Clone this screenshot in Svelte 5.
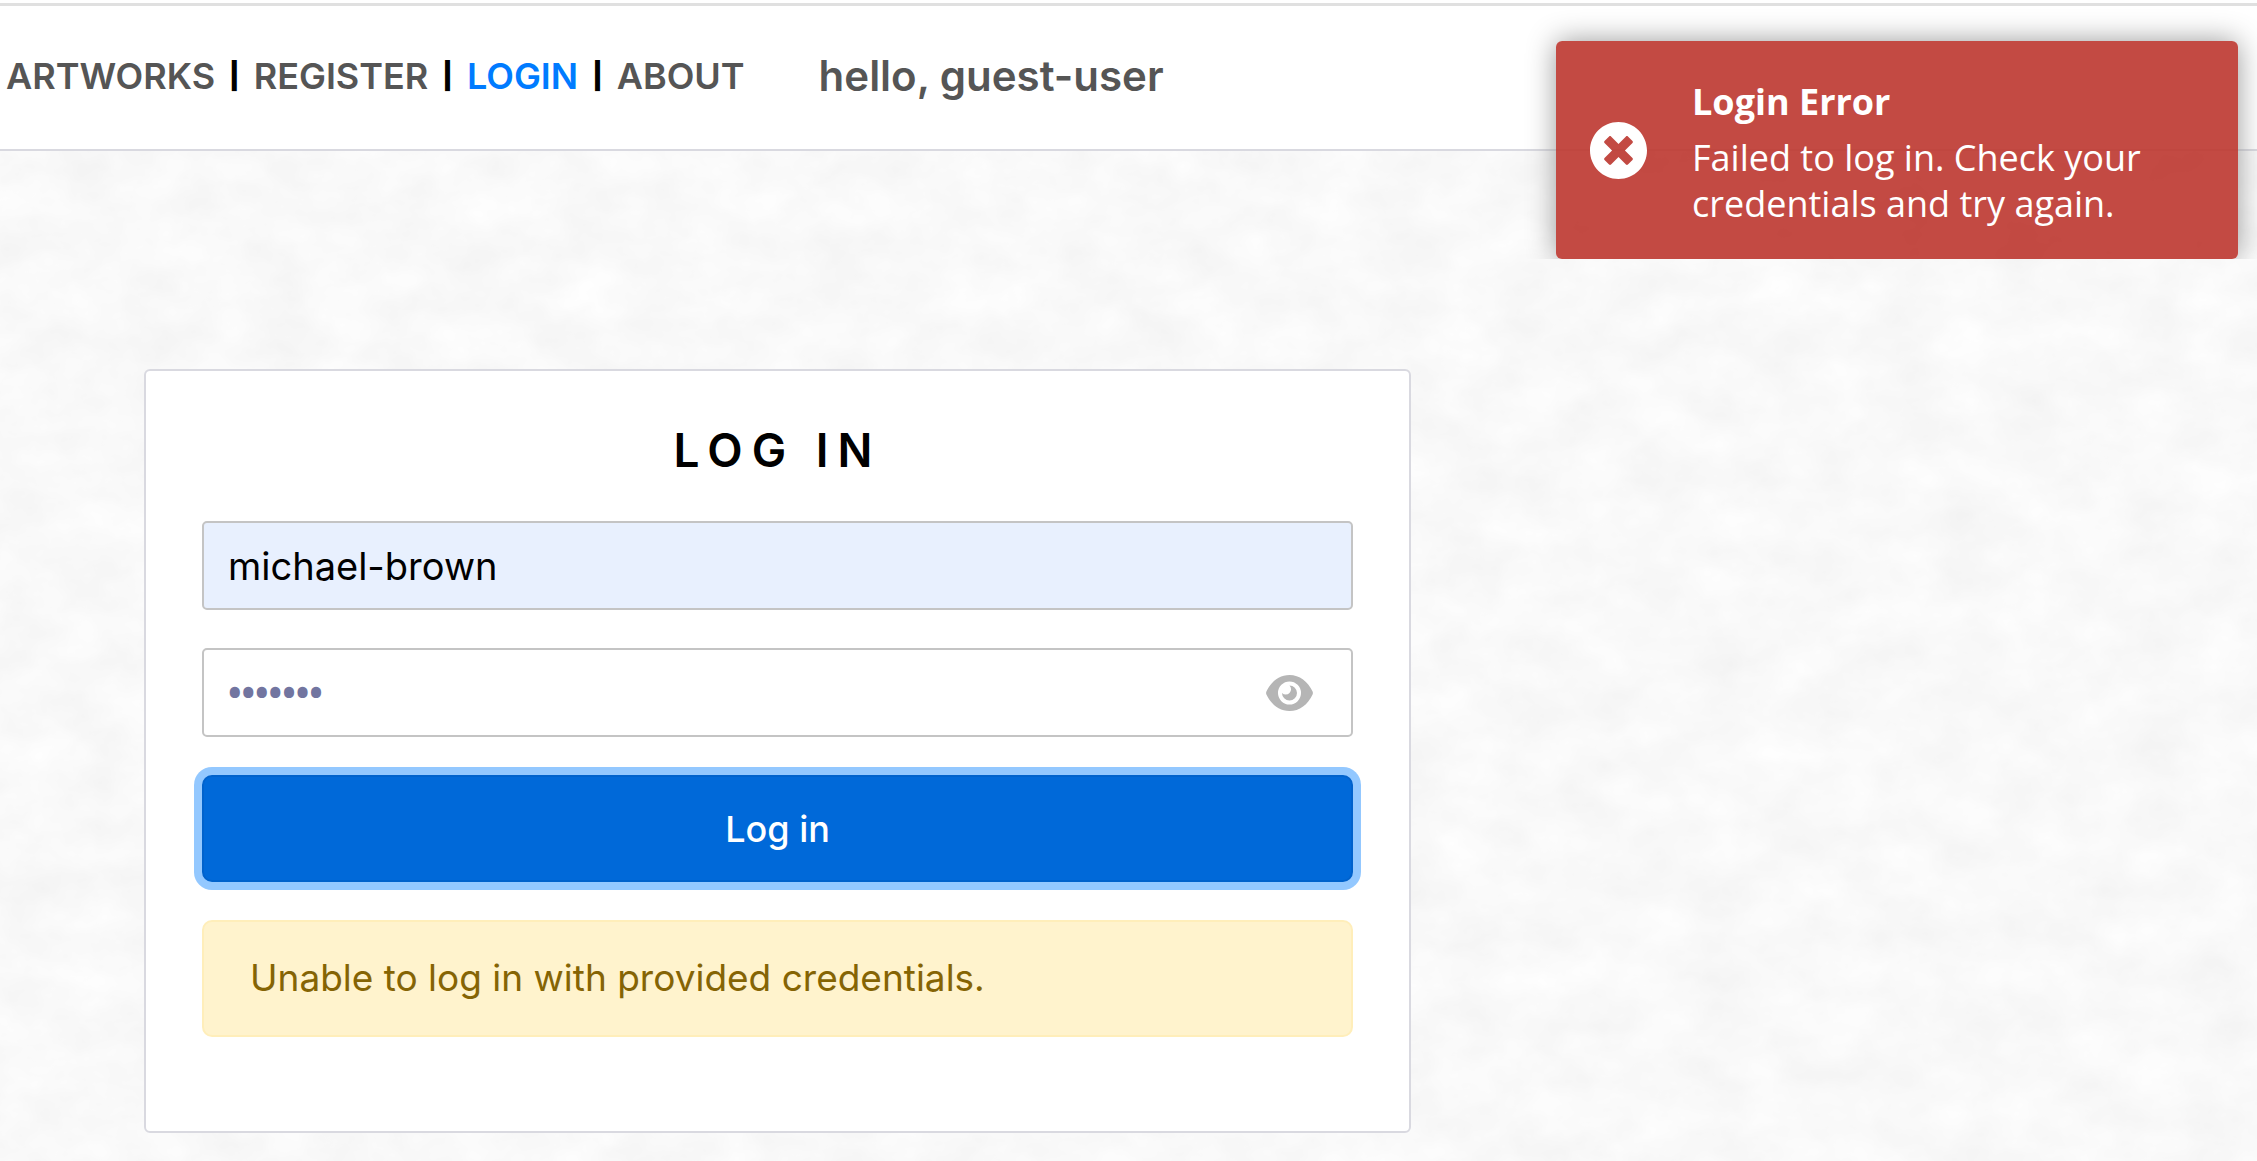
<script>
  let username = $state('michael-brown');
  let password = $state('secrets');
  let visible = $state(false);
  const links = ['ARTWORKS', 'REGISTER', 'LOGIN', 'ABOUT'];
</script>

<div class="page">
  <svg class="texture" aria-hidden="true">
    <filter id="plaster" x="0" y="0" width="100%" height="100%" color-interpolation-filters="sRGB">
      <feTurbulence type="fractalNoise" baseFrequency="0.016 0.022" numOctaves="4" seed="8" result="noise" />
      <feColorMatrix type="matrix" values="0.05 0 0 0 0.951  0.05 0 0 0 0.951  0.05 0 0 0 0.951  0 0 0 0 1" />
    </filter>
    <rect width="100%" height="100%" filter="url(#plaster)" />
  </svg>

  <header>
    <nav aria-label="Main">
      {#each links as link, i}
        {#if i > 0}<span class="bar">|</span>{/if}
        <a href="#{link.toLowerCase()}" class:active={link === 'LOGIN'}>{link}</a>
      {/each}
    </nav>
    <span class="hello">hello, guest-user</span>
  </header>

  <main>
    <form class="card" onsubmit={(e) => e.preventDefault()}>
      <h1>LOG IN</h1>
      <input class="field filled" type="text" aria-label="Username" bind:value={username} />
      <div class="field password">
        <input type={visible ? 'text' : 'password'} aria-label="Password" bind:value={password} />
        <button type="button" class="eye" aria-label="Show password" onclick={() => (visible = !visible)}>
          <svg viewBox="0 0 47 36">
            <path fill-rule="evenodd" d="M0.4 16.6C5 6.600 13.500 0 23.500 0S42 6.600 46.600 16.600Q47.200 18 46.600 19.400C42 29.400 33.500 36 23.500 36S5 29.400 0.400 19.400Q-0.200 18 0.400 16.600ZM23.500 6.500a11.500 11.500 0 1 0 0 23a11.500 11.500 0 1 0 0-23Z" />
            <path d="M23.500 10.500a7.500 7.500 0 1 1-7.500 7.500a4.800 4.800 0 0 0 7.500-7.500Z" />
          </svg>
        </button>
      </div>
      <button type="submit" class="submit">Log in</button>
      <p class="warning" role="alert">Unable to log in with provided credentials.</p>
    </form>
  </main>

  <div class="toasts">
    <div class="toast" role="alert">
      <svg viewBox="8 8 496 496" aria-hidden="true">
        <path d="M256 8C119 8 8 119 8 256s111 248 248 248 248-111 248-248S393 8 256 8zm121.600 313.100c4.700 4.700 4.700 12.300 0 17L338 377.600c-4.700 4.700-12.300 4.700-17 0L256 312l-65.100 65.600c-4.700 4.700-12.300 4.700-17 0L134.400 338c-4.700-4.700-4.700-12.300 0-17l65.600-65-65.600-65.100c-4.700-4.700-4.700-12.300 0-17l39.600-39.600c4.700-4.700 12.300-4.700 17 0l65 65.700 65.100-65.600c4.700-4.700 12.300-4.700 17 0l39.600 39.600c4.700 4.700 4.700 12.300 0 17L312 256l65.600 65.100z" />
      </svg>
      <div class="message">
        <strong>Login Error</strong>
        <p>Failed to log in. Check your credentials and try again.</p>
      </div>
    </div>
  </div>
</div>

<style>
  :global(body) {
    margin: 0;
    background: #fafafa;
  }
  .page {
    position: relative;
    isolation: isolate;
    box-sizing: border-box;
    min-height: 100vh;
    padding-top: 3px;
    overflow: hidden;
    background: #fff;
    font-family: Inter, 'Liberation Sans', sans-serif;
    font-size: 37px;
    color: #000;
  }
  .texture {
    position: absolute;
    inset: 0;
    z-index: -1;
    width: 100%;
    height: 100%;
  }
  header {
    display: flex;
    align-items: center;
    gap: 74px;
    box-sizing: border-box;
    height: 148px;
    padding: 0 0 4px 6px;
    border-top: 3px solid #e0e0e0;
    border-bottom: 2px solid #d9d9e0;
    background: #fff;
    box-shadow: 0 -3px #fff;
    white-space: nowrap;
  }
  nav {
    display: flex;
    align-items: center;
    gap: 14px;
    font-size: 36px;
    font-weight: 600;
  }
  nav a {
    color: #555;
    text-decoration: none;
  }
  nav a.active {
    color: #007bff;
  }
  .bar {
    font-size: 26px;
    font-weight: 900;
  }
  .hello {
    color: #555;
    font-weight: 600;
    font-size: 42px;
  }
  main {
    padding: 218px 20px 28px 144px;
  }
  .card {
    display: flex;
    flex-direction: column;
    gap: 38px;
    box-sizing: border-box;
    max-width: 1267px;
    padding: 49px 56px 94px;
    border: 2px solid #d9d9e0;
    border-radius: 6px;
    background: #fff;
  }
  h1 {
    margin: 0 0 3px;
    font-size: 46px;
    font-weight: 600;
    line-height: 60px;
    letter-spacing: 9px;
    text-align: center;
  }
  .field {
    box-sizing: border-box;
    width: 100%;
    height: 89px;
    padding: 0 24px;
    border: 2px solid #c4c4c4;
    border-radius: 5px;
    background: #fff;
    font: inherit;
    font-size: 38px;
    color: #000;
  }
  .filled {
    background: #e8f0fe;
  }
  .password {
    display: flex;
    align-items: center;
    padding-right: 38px;
  }
  .password input {
    flex: 1;
    min-width: 0;
    padding: 0;
    border: 0;
    outline: 0;
    background: none;
    font: 700 36px 'Open Sans', sans-serif;
    color: #7275a0;
  }
  .eye {
    display: flex;
    padding: 0;
    border: 0;
    background: none;
  }
  .eye svg {
    width: 47px;
    height: 36px;
    fill: #b5b5b5;
  }
  .submit {
    height: 107px;
    border: 2px solid #0062cc;
    border-radius: 10px;
    background: #0069d9;
    box-shadow: 0 0 0 8px #93c8ff;
    font: inherit;
    font-size: 36px;
    font-weight: 500;
    color: #fff;
  }
  .warning {
    margin: 0;
    padding: 28px 46px 30px;
    border: 2px solid #ffeeba;
    border-radius: 10px;
    background: #fff3cd;
    line-height: 55px;
    color: #856404;
  }
  .toasts {
    position: absolute;
    top: 0;
    right: 0;
    padding: 41px 19px 0 40px;
    overflow: hidden;
  }
  .toast {
    display: flex;
    align-items: center;
    gap: 45px;
    box-sizing: border-box;
    width: 682px;
    padding: 32px 34px;
    border-radius: 6px;
    background: rgb(189 54 47 / 90%);
    box-shadow: 0 0 29px #999;
    font-family: 'Open Sans', 'Noto Sans', sans-serif;
    font-size: 36px;
    line-height: 46px;
    color: #fff;
  }
  .toast svg {
    flex: none;
    width: 57px;
    height: 57px;
    fill: #fff;
  }
  .message {
    padding-top: 6px;
  }
  .toast p {
    margin: 10px 0 0;
  }
</style>
